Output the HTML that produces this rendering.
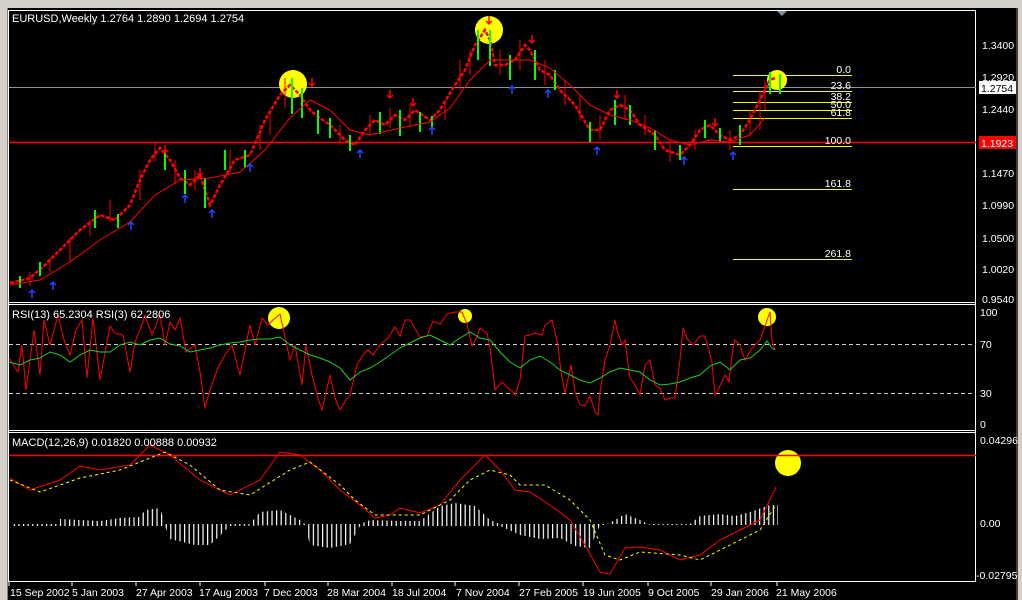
<!DOCTYPE html>
<html><head><meta charset="utf-8"><style>
html,body{margin:0;padding:0;background:#000;width:1022px;height:600px;overflow:hidden}
svg{display:block}
text{font-family:"Liberation Sans",sans-serif;font-size:10.5px;fill:#fff}
</style></head><body>
<svg width="1022" height="600" viewBox="0 0 1022 600" xmlns="http://www.w3.org/2000/svg">
<defs>
<pattern id="hb" width="4.6" height="10" patternUnits="userSpaceOnUse"><rect x="0" y="0" width="1.2" height="10" fill="#fff"/></pattern>
</defs>
<rect x="0" y="0" width="1022" height="600" fill="#000"/>
<rect x="0" y="0" width="1022" height="8" fill="#d4d0c8"/>
<rect x="0" y="8" width="7" height="592" fill="#d4d0c8"/>
<rect x="7" y="8" width="1" height="592" fill="#808080"/>
<rect x="1016" y="8" width="6" height="592" fill="#404040"/>
<rect x="1018" y="8" width="4" height="592" fill="#d4d0c8"/>
<polygon points="777,11 787,11 782,16" fill="#8090a0"/>
<g stroke="#fff" stroke-width="1" fill="none">
<rect x="8.5" y="10.5" width="967" height="571"/>
<line x1="8" y1="302.5" x2="976" y2="302.5"/><line x1="8" y1="304.5" x2="976" y2="304.5"/>
<line x1="8" y1="430.5" x2="976" y2="430.5"/><line x1="8" y1="432.5" x2="976" y2="432.5"/>
</g>
<line x1="9" y1="87.5" x2="976" y2="87.5" stroke="#909090"/>
<line x1="9" y1="142.5" x2="976" y2="142.5" stroke="#f00" stroke-width="1.5"/>
<g stroke="#ff0" stroke-width="1">
<line x1="733" y1="75.5" x2="852" y2="75.5"/><line x1="733" y1="91.5" x2="852" y2="91.5"/>
<line x1="733" y1="102.5" x2="852" y2="102.5"/><line x1="733" y1="110.5" x2="852" y2="110.5"/>
<line x1="733" y1="118.5" x2="852" y2="118.5"/><line x1="733" y1="146.5" x2="852" y2="146.5"/>
<line x1="733" y1="189.5" x2="852" y2="189.5"/><line x1="733" y1="259.5" x2="852" y2="259.5"/>
</g>
<g text-anchor="end" style="font-size:10px">
<text x="851" y="73">0.0</text><text x="851" y="89">23.6</text><text x="851" y="100">38.2</text>
<text x="851" y="108">50.0</text><text x="851" y="116">61.8</text><text x="851" y="144">100.0</text>
<text x="851" y="187">161.8</text><text x="851" y="257">261.8</text>
</g>
<g fill="#ff0">
<circle cx="293" cy="84" r="14"/><circle cx="489" cy="30" r="14"/><circle cx="777" cy="80" r="10"/>
<circle cx="279" cy="318" r="11"/><circle cx="465" cy="316" r="7"/><circle cx="767" cy="317" r="9"/>
<circle cx="788" cy="463" r="13"/>
</g>
<polyline fill="none" stroke="#f00" stroke-width="2.5" stroke-dasharray="4,1.5" points="10,283 30,278 45,265 60,250 80,230 100,215 115,220 130,205 140,180 150,160 160,148 170,160 180,178 190,185 200,175 210,205 220,185 235,160 250,155 265,120 280,95 290,85 300,95 310,110 320,118 330,125 345,140 355,145 365,130 375,120 385,125 395,115 405,120 415,110 430,120 440,110 455,85 465,70 475,45 485,30 490,40 495,65 505,65 515,60 525,45 530,50 540,70 550,75 560,90 575,105 590,130 600,130 610,110 620,105 630,110 640,125 655,135 665,150 680,155 690,145 700,130 710,125 720,135 730,140 740,135 750,120 760,100 770,80 775,78"/>
<g stroke="#f00" stroke-width="1" fill="none">
<path d="M30,272v14M50,258v14M70,238v24M90,220v16M110,200v22M140,170v30M155,142v20M175,160v24M195,170v20M230,150v22M260,125v25M270,110v25M285,78v30M340,125v20M370,115v20M390,108v20M410,105v22M445,100v20M460,60v30M470,50v25M500,50v25M520,40v30M545,60v25M565,80v25M580,95v25M600,115v25M625,95v25M645,115v20M670,140v22M695,130v20M730,130v20M750,110v25M760,90v40M765,80v30"/>
</g>
<g stroke="#0f0" stroke-width="2" fill="none">
<path d="M20,276v12M40,262v14M95,210v18M118,214v14M165,150v20M185,170v24M205,178v30M225,150v20M245,150v18M292,78v36M302,88v30M318,110v24M330,118v20M350,135v16M380,112v22M400,110v26M420,112v20M432,116v12M478,30v30M490,30v36M510,55v25M535,50v30M555,70v20M590,122v20M615,100v25M630,105v20M655,130v20M680,145v15M705,120v18M720,128v14M740,125v20M770,72v22M780,74v20"/>
</g>
<polyline fill="none" stroke="#f00" stroke-width="1" points="10,285 40,280 70,262 100,240 130,222 155,195 180,180 210,178 240,172 265,150 290,118 310,100 330,110 350,130 370,135 400,128 430,122 450,108 470,80 490,60 510,60 530,60 550,68 570,85 590,105 610,115 630,120 650,128 670,140 690,145 710,140 730,142 750,135 765,118"/>
<g fill="none" stroke-width="1.5">
<g stroke="#f00"><path d="M165,145v8m-3,-3 3,3 3,-3M200,168v8m-3,-3 3,3 3,-3M312,78v8m-3,-3 3,3 3,-3M390,90v8m-3,-3 3,3 3,-3M413,98v8m-3,-3 3,3 3,-3M489,16v8m-3,-3 3,3 3,-3M532,35v8m-3,-3 3,3 3,-3M617,90v8m-3,-3 3,3 3,-3M715,118v8m-3,-3 3,3 3,-3"/></g>
<g stroke="#24f"><path d="M32,298v-8m-3,3 3,-3 3,3M53,290v-8m-3,3 3,-3 3,3M131,230v-8m-3,3 3,-3 3,3M185,203v-8m-3,3 3,-3 3,3M212,218v-8m-3,3 3,-3 3,3M250,172v-8m-3,3 3,-3 3,3M360,158v-8m-3,3 3,-3 3,3M432,135v-8m-3,3 3,-3 3,3M512,94v-8m-3,3 3,-3 3,3M548,98v-8m-3,3 3,-3 3,3M597,155v-8m-3,3 3,-3 3,3M684,165v-8m-3,3 3,-3 3,3M733,160v-8m-3,3 3,-3 3,3"/></g>
</g>
<text x="12" y="22" style="font-size:11px">EURUSD,Weekly  1.2764 1.2890 1.2694 1.2754</text>
<g style="font-size:11px">
<text x="982" y="49">1.3400</text><text x="982" y="81">1.2920</text>
<rect x="979" y="81" width="37" height="13" fill="#fff"/><text x="981" y="92" style="fill:#000">1.2754</text>
<text x="982" y="113">1.2440</text>
<rect x="979" y="136" width="37" height="13" fill="#f00"/><text x="981" y="147">1.1923</text>
<text x="982" y="177">1.1470</text><text x="982" y="209">1.0990</text><text x="982" y="242">1.0500</text>
<text x="982" y="273">1.0020</text><text x="982" y="303">0.9540</text>
<text x="980" y="316">100</text><text x="980" y="348">70</text><text x="980" y="397">30</text><text x="980" y="428">0</text>
<text x="980" y="444">0.04296</text><text x="980" y="527">0.00</text><text x="976" y="579">-0.02795</text>
</g>
<g stroke="#ccc" stroke-dasharray="4,3"><line x1="9" y1="344.5" x2="976" y2="344.5"/><line x1="9" y1="393.5" x2="976" y2="393.5"/></g>
<polyline fill="none" stroke="#f00" stroke-width="1" points="9,358 18,372 22,345 26,390 34,330 40,375 44,320 50,345 58,315 64,340 70,355 76,330 82,320 87,378 93,318 100,380 110,326 115,333 123,335 130,372 135,342 140,330 145,315 152,335 160,315 165,345 170,322 175,330 180,318 186,352 195,345 200,372 205,408 210,390 218,368 225,355 232,345 240,375 250,325 255,345 262,318 268,325 273,320 280,314 285,337 290,360 295,345 302,385 306,345 312,375 318,398 322,410 330,375 335,398 340,410 346,400 350,395 357,365 363,355 368,350 373,355 380,345 388,338 395,327 400,336 405,320 410,320 420,337 427,336 433,321 440,324 447,314 455,312 462,312 467,324 472,346 477,337 480,328 487,333 490,348 493,372 495,390 502,382 508,388 512,391 515,395 520,380 525,336 530,335 535,333 542,335 545,325 552,320 558,345 561,372 565,393 571,365 575,392 580,405 585,406 590,396 595,412 598,415 600,392 605,360 610,345 615,320 617,330 622,345 625,340 630,378 635,385 640,395 645,365 650,360 655,385 660,388 665,400 670,398 675,398 680,360 683,328 688,340 693,345 700,336 705,336 712,362 715,395 718,390 725,375 729,382 733,348 735,340 740,345 745,360 752,348 760,340 770,312 772,340 775,350"/>
<polyline fill="none" stroke="#2c2" stroke-width="1" points="9,362 20,365 30,360 40,358 50,352 60,355 70,362 80,355 90,350 100,352 110,352 120,345 130,342 140,345 150,340 160,338 170,344 180,346 190,352 200,350 210,348 220,345 230,343 240,342 250,340 260,339 270,339 280,337 290,345 300,350 310,355 320,358 330,362 340,368 350,380 360,372 370,368 380,362 390,355 400,348 410,343 420,338 430,335 440,340 450,345 460,338 470,332 480,338 490,340 500,352 510,362 520,368 530,360 540,356 550,362 560,370 570,375 580,380 590,383 600,378 610,372 620,368 630,370 640,372 650,380 660,385 670,384 680,382 690,378 700,375 710,366 720,362 730,370 740,360 750,358 760,350 767,341 772,348 775,350"/>
<text x="12" y="318" style="font-size:11px">RSI(13) 65.2304  RSI(3) 62.2806</text>
<line x1="9" y1="455.5" x2="976" y2="455.5" stroke="#f00" stroke-width="1.5"/>
<polygon fill="url(#hb)" points="12,524 60,524 60,519 100,521 120,518 140,517 145,510 160,508 165,524 250,524 260,512 280,510 300,520 305,524 360,524 370,520 400,521 420,521 440,506 455,503 475,506 490,520 500,524 690,524 700,516 720,514 735,516 750,512 770,505 778,505 778,525 650,525 640,520 625,514 615,520 605,525 600,525 590,548 575,546 560,538 540,539 520,535 500,526 360,526 350,544 330,548 310,545 305,525 230,526 210,545 195,545 170,539 165,526 12,526"/>
<polyline fill="none" stroke="#f00" stroke-width="1" points="10,478 30,490 60,480 80,466 100,470 130,465 150,445 170,455 200,480 230,495 260,480 280,452 300,455 320,470 340,490 360,505 375,518 390,515 400,508 420,513 440,505 460,480 475,465 485,455 500,470 515,490 530,492 550,505 570,520 585,545 600,572 610,574 625,548 640,547 660,550 680,560 700,555 720,540 740,530 760,520 776,487"/>
<polyline fill="none" stroke="#ff0" stroke-width="1" stroke-dasharray="3,3" points="10,480 40,492 80,478 120,470 165,452 190,465 220,490 250,495 290,470 310,462 340,485 355,500 375,515 420,515 450,500 470,480 490,470 510,475 520,485 545,485 570,500 590,520 605,555 620,560 640,552 680,555 700,560 720,550 760,530 776,505"/>
<text x="12" y="446" style="font-size:11px">MACD(12,26,9) 0.01820 0.00888 0.00932</text>
<g stroke="#fff"><path d="M9,582v4M72,582v4M136,582v4M200,582v4M265,582v4M328,582v4M392,582v4M455,582v4M519,582v4M583,582v4M648,582v4M711,582v4M777,582v4"/></g>
<g>
<text x="10" y="596">15 Sep 2002</text><text x="72" y="596">5 Jan 2003</text><text x="136" y="596">27 Apr 2003</text>
<text x="199" y="596">17 Aug 2003</text><text x="264" y="596">7 Dec 2003</text><text x="327" y="596">28 Mar 2004</text>
<text x="392" y="596">18 Jul 2004</text><text x="456" y="596">7 Nov 2004</text><text x="519" y="596">27 Feb 2005</text>
<text x="583" y="596">19 Jun 2005</text><text x="648" y="596">9 Oct 2005</text><text x="711" y="596">29 Jan 2006</text>
<text x="776" y="596">21 May 2006</text>
</g>
</svg>
</body></html>
